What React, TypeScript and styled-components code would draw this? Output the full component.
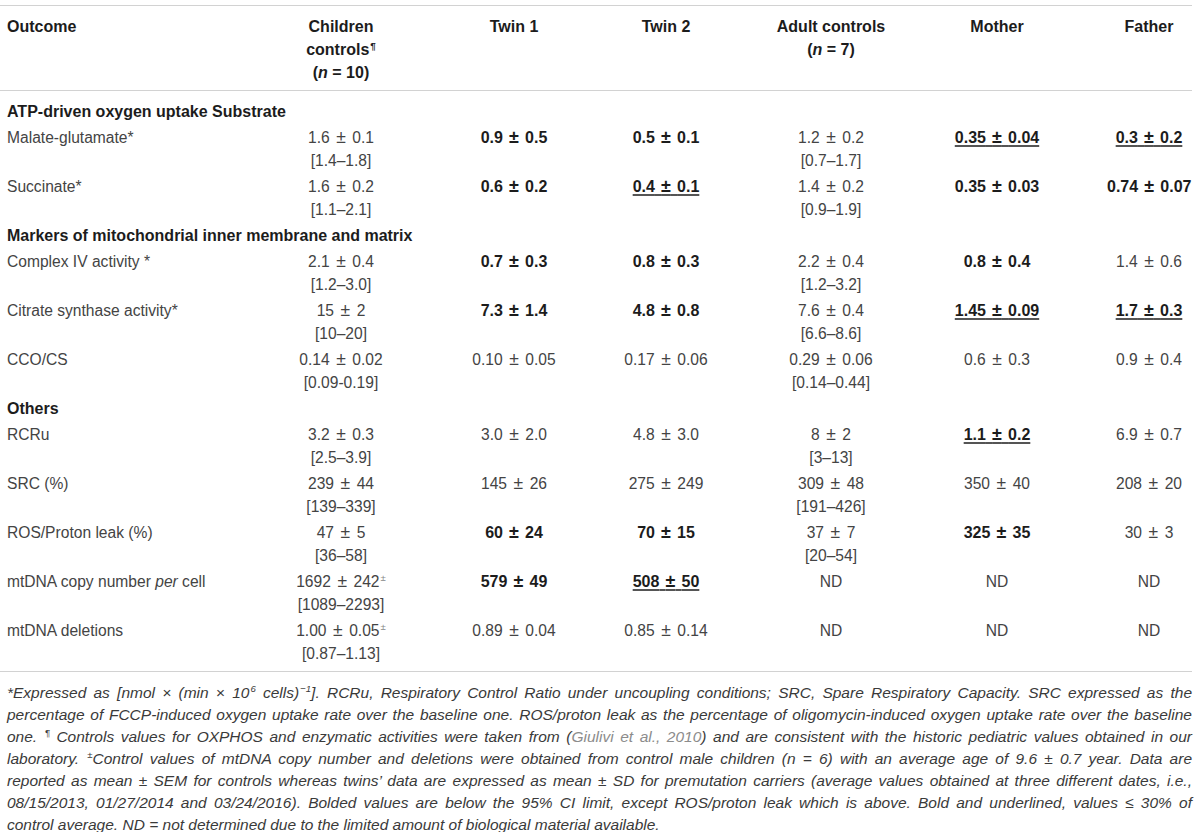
import React from "react";
import styled, { createGlobalStyle } from "styled-components";

const GlobalStyle = createGlobalStyle`
  html, body { margin: 0; padding: 0; background: #ffffff; }
  body {
    font-family: "Liberation Sans", Arial, Helvetica, sans-serif;
    color: #444;
  }
`;

const Page = styled.main`
  width: 1200px;
  padding-top: 5px;
`;

const Table = styled.table`
  width: 1192px;
  table-layout: fixed;
  border-collapse: separate;
  border-spacing: 0;
  font-size: 15.6px;
  line-height: 23px;
`;

const Col = styled.col<{ $w: number }>`
  width: ${(p) => p.$w}px;
`;

const HeadCell = styled.th<{ $left?: boolean }>`
  border-top: 1px solid #d2d2d2;
  border-bottom: 1px solid #d2d2d2;
  padding: 8.5px 0 6.5px ${(p) => (p.$left ? "7px" : "0")};
  text-align: ${(p) => (p.$left ? "left" : "center")};
  vertical-align: top;
  font-size: 16px;
  font-weight: 700;
  color: #1c1c1c;
  white-space: nowrap;
`;

const Row = styled.tr<{ $first?: boolean; $last?: boolean }>`
  & > td {
    padding-top: ${(p) => (p.$first ? "8.5px" : "1.5px")};
    padding-bottom: ${(p) => (p.$last ? "6.5px" : "1.5px")};
    border-bottom: ${(p) => (p.$last ? "1px solid #d2d2d2" : "0")};
  }
`;

const SectionCell = styled.td`
  padding-left: 7px;
  text-align: left;
  font-size: 16px;
  font-weight: 700;
  color: #1c1c1c;
  white-space: nowrap;
`;

const LabelCell = styled.td`
  padding-left: 7px;
  text-align: left;
  vertical-align: top;
  white-space: nowrap;
`;

const ValueCell = styled.td`
  text-align: center;
  vertical-align: top;
  white-space: nowrap;
  word-spacing: 2.2px;
`;

const Val = styled.span<{ $s?: "b" | "u" }>`
  font-weight: ${(p) => (p.$s ? 700 : 400)};
  font-size: ${(p) => (p.$s ? "16px" : "inherit")};
  color: ${(p) => (p.$s ? "#1c1c1c" : "inherit")};
  word-spacing: ${(p) => (p.$s ? "1.7px" : "inherit")};
  text-decoration: ${(p) => (p.$s === "u" ? "underline" : "none")};
  text-decoration-thickness: 1.5px;
  text-underline-offset: 2px;
  text-decoration-color: #555;
`;

const Pm = styled.span`
  font-size: 1.12em;
  line-height: 0;
`;

const Sup = styled.sup`
  font-size: 0.62em;
  line-height: 0;
  vertical-align: baseline;
  position: relative;
  top: -0.6em;
  margin-left: 1px;
  color: inherit;
`;

const LightSup = styled(Sup)`
  color: #888;
`;

const Notes = styled.div`
  margin-top: 10px;
  padding: 0 8px 0 7px;
  font-size: 15.5px;
  line-height: 22px;
  font-style: italic;
  color: #3a3a3a;
`;

const NoteLine = styled.div<{ $last?: boolean }>`
  text-align: justify;
  text-align-last: ${(p) => (p.$last ? "left" : "justify")};
`;

const Cite = styled.span`
  color: #8c8c8c;
`;

type Cell = { v: string; s?: "b" | "u"; sup?: string; r?: string };
type DataRow = { kind: "data"; label: React.ReactNode; cells: Cell[] };
type HeadRow = { kind: "head"; label: string };
type AnyRow = DataRow | HeadRow;

const ROWS: AnyRow[] = [
  { kind: "head", label: "ATP-driven oxygen uptake Substrate" },
  {
    kind: "data",
    label: "Malate-glutamate*",
    cells: [
      { v: "1.6 ± 0.1", r: "[1.4–1.8]" },
      { v: "0.9 ± 0.5", s: "b" },
      { v: "0.5 ± 0.1", s: "b" },
      { v: "1.2 ± 0.2", r: "[0.7–1.7]" },
      { v: "0.35 ± 0.04", s: "u" },
      { v: "0.3 ± 0.2", s: "u" },
    ],
  },
  {
    kind: "data",
    label: "Succinate*",
    cells: [
      { v: "1.6 ± 0.2", r: "[1.1–2.1]" },
      { v: "0.6 ± 0.2", s: "b" },
      { v: "0.4 ± 0.1", s: "u" },
      { v: "1.4 ± 0.2", r: "[0.9–1.9]" },
      { v: "0.35 ± 0.03", s: "b" },
      { v: "0.74 ± 0.07", s: "b" },
    ],
  },
  { kind: "head", label: "Markers of mitochondrial inner membrane and matrix" },
  {
    kind: "data",
    label: "Complex IV activity *",
    cells: [
      { v: "2.1 ± 0.4", r: "[1.2–3.0]" },
      { v: "0.7 ± 0.3", s: "b" },
      { v: "0.8 ± 0.3", s: "b" },
      { v: "2.2 ± 0.4", r: "[1.2–3.2]" },
      { v: "0.8 ± 0.4", s: "b" },
      { v: "1.4 ± 0.6" },
    ],
  },
  {
    kind: "data",
    label: "Citrate synthase activity*",
    cells: [
      { v: "15 ± 2", r: "[10–20]" },
      { v: "7.3 ± 1.4", s: "b" },
      { v: "4.8 ± 0.8", s: "b" },
      { v: "7.6 ± 0.4", r: "[6.6–8.6]" },
      { v: "1.45 ± 0.09", s: "u" },
      { v: "1.7 ± 0.3", s: "u" },
    ],
  },
  {
    kind: "data",
    label: "CCO/CS",
    cells: [
      { v: "0.14 ± 0.02", r: "[0.09-0.19]" },
      { v: "0.10 ± 0.05" },
      { v: "0.17 ± 0.06" },
      { v: "0.29 ± 0.06", r: "[0.14–0.44]" },
      { v: "0.6 ± 0.3" },
      { v: "0.9 ± 0.4" },
    ],
  },
  { kind: "head", label: "Others" },
  {
    kind: "data",
    label: "RCRu",
    cells: [
      { v: "3.2 ± 0.3", r: "[2.5–3.9]" },
      { v: "3.0 ± 2.0" },
      { v: "4.8 ± 3.0" },
      { v: "8 ± 2", r: "[3–13]" },
      { v: "1.1 ± 0.2", s: "u" },
      { v: "6.9 ± 0.7" },
    ],
  },
  {
    kind: "data",
    label: "SRC (%)",
    cells: [
      { v: "239 ± 44", r: "[139–339]" },
      { v: "145 ± 26" },
      { v: "275 ± 249" },
      { v: "309 ± 48", r: "[191–426]" },
      { v: "350 ± 40" },
      { v: "208 ± 20" },
    ],
  },
  {
    kind: "data",
    label: "ROS/Proton leak (%)",
    cells: [
      { v: "47 ± 5", r: "[36–58]" },
      { v: "60 ± 24", s: "b" },
      { v: "70 ± 15", s: "b" },
      { v: "37 ± 7", r: "[20–54]" },
      { v: "325 ± 35", s: "b" },
      { v: "30 ± 3" },
    ],
  },
  {
    kind: "data",
    label: (
      <>
        mtDNA copy number <em>per</em> cell
      </>
    ),
    cells: [
      { v: "1692 ± 242", sup: "±", r: "[1089–2293]" },
      { v: "579 ± 49", s: "b" },
      { v: "508 ± 50", s: "u" },
      { v: "ND" },
      { v: "ND" },
      { v: "ND" },
    ],
  },
  {
    kind: "data",
    label: "mtDNA deletions",
    cells: [
      { v: "1.00 ± 0.05", sup: "±", r: "[0.87–1.13]" },
      { v: "0.89 ± 0.04" },
      { v: "0.85 ± 0.14" },
      { v: "ND" },
      { v: "ND" },
      { v: "ND" },
    ],
  },
];

const WIDTHS = [212, 258, 88, 216, 114, 218, 86];

function renderValue(v: string) {
  const parts = v.split(" ± ");
  if (parts.length !== 2) return v;
  return (
    <>
      {parts[0]} <Pm>±</Pm> {parts[1]}
    </>
  );
}

export default function App() {
  return (
    <>
      <GlobalStyle />
      <Page>
        <Table>
          <colgroup>
            {WIDTHS.map((w, i) => (
              <Col key={i} $w={w} />
            ))}
          </colgroup>
          <thead>
            <tr>
              <HeadCell $left>Outcome</HeadCell>
              <HeadCell>
                Children
                <br />
                controls<Sup>¶</Sup>
                <br />(<i>n</i> = 10)
              </HeadCell>
              <HeadCell>Twin 1</HeadCell>
              <HeadCell>Twin 2</HeadCell>
              <HeadCell>
                Adult controls
                <br />(<i>n</i> = 7)
              </HeadCell>
              <HeadCell>Mother</HeadCell>
              <HeadCell>Father</HeadCell>
            </tr>
          </thead>
          <tbody>
            {ROWS.map((row, i) => {
              const first = i === 0;
              const last = i === ROWS.length - 1;
              if (row.kind === "head") {
                return (
                  <Row key={i} $first={first} $last={last}>
                    <SectionCell colSpan={7}>{row.label}</SectionCell>
                  </Row>
                );
              }
              return (
                <Row key={i} $first={first} $last={last}>
                  <LabelCell>{row.label}</LabelCell>
                  {row.cells.map((c, j) => (
                    <ValueCell key={j}>
                      <Val $s={c.s}>{renderValue(c.v)}</Val>
                      {c.sup && <LightSup>{c.sup}</LightSup>}
                      {c.r && (
                        <>
                          <br />
                          {c.r}
                        </>
                      )}
                    </ValueCell>
                  ))}
                </Row>
              );
            })}
          </tbody>
        </Table>
        <Notes>
          <NoteLine>
            *Expressed as [nmol × (min × 10<Sup>6</Sup> cells)<Sup>−1</Sup>]. RCRu, Respiratory
            Control Ratio under uncoupling conditions; SRC, Spare Respiratory Capacity. SRC
            expressed as the
          </NoteLine>
          <NoteLine>
            percentage of FCCP-induced oxygen uptake rate over the baseline one. ROS/proton leak as
            the percentage of oligomycin-induced oxygen uptake rate over the baseline
          </NoteLine>
          <NoteLine>
            one. <Sup>¶</Sup> Controls values for OXPHOS and enzymatic activities were taken from (
            <Cite>Giulivi et al., 2010</Cite>) and are consistent with the historic pediatric values
            obtained in our
          </NoteLine>
          <NoteLine>
            laboratory. <Sup>±</Sup>Control values of mtDNA copy number and deletions were obtained
            from control male children (n = 6) with an average age of 9.6 ± 0.7 year. Data are
          </NoteLine>
          <NoteLine>
            reported as mean ± SEM for controls whereas twins’ data are expressed as mean ± SD for
            premutation carriers (average values obtained at three different dates, i.e.,
          </NoteLine>
          <NoteLine>
            08/15/2013, 01/27/2014 and 03/24/2016). Bolded values are below the 95% CI limit, except
            ROS/proton leak which is above. Bold and underlined, values ≤ 30% of
          </NoteLine>
          <NoteLine $last>
            control average. ND = not determined due to the limited amount of biological material
            available.
          </NoteLine>
        </Notes>
      </Page>
    </>
  );
}
